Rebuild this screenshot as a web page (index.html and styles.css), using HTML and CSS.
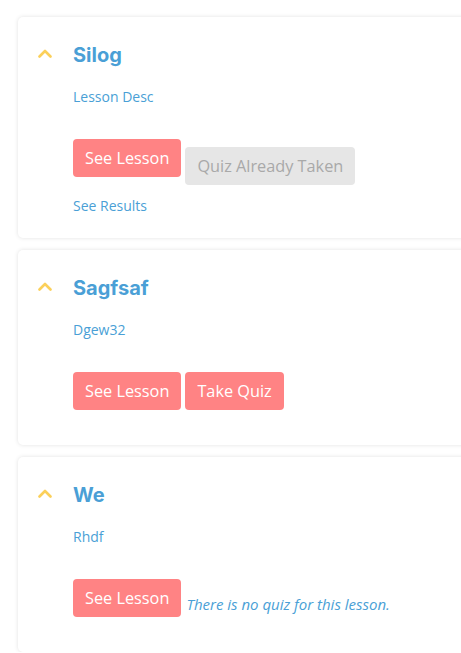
FILE: index.html
```html
<!DOCTYPE html>
<html>
<head>
<meta charset="utf-8">
<link rel="stylesheet" href="styles.css">
</head>
<body>
<div class="list">
  <section class="card">
    <div class="head">
      <svg class="chev" width="14" height="9" viewBox="0 0 14 9"><path d="M1.5 7.5 L7 2 L12.5 7.5" fill="none" stroke="#fbd05a" stroke-width="2.6" stroke-linecap="round" stroke-linejoin="round"/></svg>
      <h2 class="title">Silog</h2>
    </div>
    <div class="body">
      <p class="desc">Lesson Desc</p>
      <div class="actions">
        <button class="btn btn-primary">See Lesson</button>
        <button class="btn btn-disabled">Quiz Already Taken</button>
      </div>
      <a class="results">See Results</a>
    </div>
  </section>
  <section class="card">
    <div class="head">
      <svg class="chev" width="14" height="9" viewBox="0 0 14 9"><path d="M1.5 7.5 L7 2 L12.5 7.5" fill="none" stroke="#fbd05a" stroke-width="2.6" stroke-linecap="round" stroke-linejoin="round"/></svg>
      <h2 class="title">Sagfsaf</h2>
    </div>
    <div class="body">
      <p class="desc">Dgew32</p>
      <div class="actions">
        <button class="btn btn-primary">See Lesson</button>
        <button class="btn btn-primary">Take Quiz</button>
      </div>
    </div>
  </section>
  <section class="card">
    <div class="head">
      <svg class="chev" width="14" height="9" viewBox="0 0 14 9"><path d="M1.5 7.5 L7 2 L12.5 7.5" fill="none" stroke="#fbd05a" stroke-width="2.6" stroke-linecap="round" stroke-linejoin="round"/></svg>
      <h2 class="title">We</h2>
    </div>
    <div class="body">
      <p class="desc">Rhdf</p>
      <div class="actions">
        <button class="btn btn-primary">See Lesson</button>
        <em class="noquiz">There is no quiz for this lesson.</em>
      </div>
    </div>
  </section>
</div>
</body>
</html>
```

FILE: styles.css
```css
html, body {
  margin: 0;
  padding: 0;
  background: #ffffff;
  overflow: hidden;
}
body {
  font-family: "Open Sans", "Liberation Sans", sans-serif;
}
.list {
  padding: 17px 0 0 18px;
  display: flex;
  flex-direction: column;
  gap: 12px;
  width: 470px;
}
.card {
  background: #fff;
  border-radius: 5px;
  box-shadow: 0 0 4px rgba(0, 0, 0, 0.12);
  padding: 26px 0 35px 0;
}
.head {
  display: flex;
  align-items: center;
  height: 24px;
}
.chev {
  margin-left: 20px;
  width: 14px;
  height: 9px;
  margin-top: -4px;
}
.title {
  margin: 0 0 0 21px;
  font-family: "Inter", "Noto Sans", sans-serif;
  font-weight: 700;
  font-size: 20px;
  line-height: 24px;
  color: #4a9fd6;
}
.body {
  padding-left: 55px;
}
.desc {
  margin: 20px 0 0 0;
  font-size: 14px;
  line-height: 20px;
  color: #4a9fd6;
}
.actions {
  margin-top: 32px;
  display: flex;
  align-items: flex-start;
  gap: 4px;
}
.btn {
  font-family: "Open Sans", "Liberation Sans", sans-serif;
  font-size: 16.3px;
  line-height: 22px;
  height: 38px;
  padding: 0 12px;
  border: none;
  border-radius: 4px;
  cursor: pointer;
}
.btn-primary {
  background: #ff8384;
  color: #fff;
}
.btn-disabled {
  margin-top: 8px;
  background: #e6e6e6;
  color: #a9a9a9;
}
.noquiz {
  align-self: flex-end;
  margin-left: 1px;
  font-size: 15px;
  line-height: 20px;
  margin-bottom: 3px;
  color: #4a9fd6;
}
.results {
  display: block;
  margin: 11px 0 -13px 0;
  font-size: 14px;
  line-height: 20px;
  color: #4a9fd6;
}
```
